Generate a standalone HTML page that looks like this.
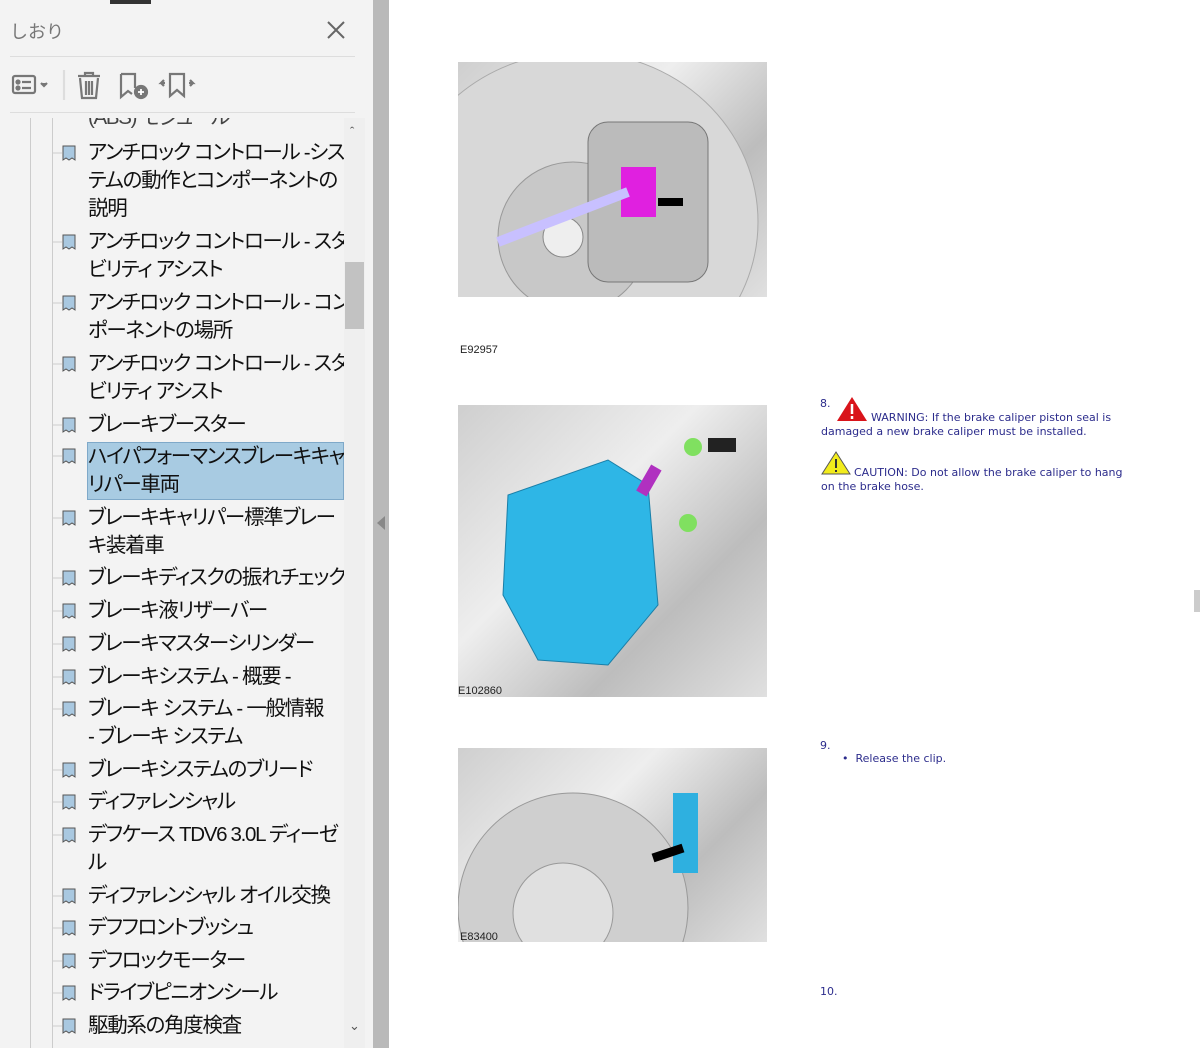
<!DOCTYPE html>
<html><head><meta charset="utf-8"><style>
body{margin:0;width:1200px;height:1048px;position:relative;overflow:hidden;background:#fff;font-family:"Liberation Sans","Noto Sans CJK JP",sans-serif}
#left{position:absolute;left:0;top:0;width:373px;height:1048px;background:#f3f3f3}
#bar{position:absolute;left:373px;top:0;width:16px;height:1048px;background:#b9b9b9}
#topdark{position:absolute;left:110px;top:0;width:41px;height:4px;background:#333;z-index:5}
.it{position:absolute;left:88px;width:256px;font-size:20.5px;line-height:28px;color:#111;white-space:nowrap;font-feature-settings:"palt";letter-spacing:-1.3px}
.hl{position:absolute;left:87px;top:442px;width:255px;height:56px;background:#a8cbe2;border:1px solid #7fa9c9}
.cap{position:absolute;font-size:11px;color:#222}
.img{position:absolute;left:458px;width:309px;background:linear-gradient(135deg,#cfcfcf,#eeeeee 40%,#bdbdbd 70%,#e0e0e0)}
.txt{position:absolute;font-family:"DejaVu Sans",sans-serif;font-size:11px;color:#2c2c8c;line-height:14px}
#clip{position:absolute;left:0;top:118px;width:344px;height:930px;overflow:hidden}
#clip .it{margin-top:-118px}
</style></head><body>
<div id="left">
<div style="position:absolute;left:10px;top:18px;font-size:18px;color:#777">しおり</div>
<svg style="position:absolute;left:326px;top:20px" width="20" height="20"><path d="M2 2L18 18M18 2L2 18" stroke="#666" stroke-width="2"/></svg>
<div style="position:absolute;left:10px;top:56px;width:345px;height:1px;background:#ddd"></div>
<svg style="position:absolute;left:10px;top:70px" width="190" height="32" fill="none" stroke="#777" stroke-width="2.2">
<rect x="3" y="6" width="22" height="17" rx="2"/><circle cx="8" cy="12" r="1.5" fill="#777"/><circle cx="8" cy="18" r="1.5" fill="#777"/><path d="M12 12h9M12 18h9"/><path d="M31 13l3 3 3-3" fill="#777"/>
<path d="M54 0v30" stroke="#ddd"/>
<path d="M68 6h22M75 6V3h8v3M70 8l2 20h14l2-20M76 11v14M79 11v14M82 11v14"/>
<path d="M111 4h14v14M111 4v23l7-6 4 3"/><circle cx="131" cy="22" r="6" fill="#777"/><path d="M128 22h6M131 19v6" stroke="#fff" stroke-width="1.8"/>
<path d="M160 4h14v22l-7-6-7 6zM155 13h-4l3-3M151 13l3 3M179 13h4l-3-3M183 13l-3 3"/>
</svg>
<div style="position:absolute;left:10px;top:112px;width:345px;height:1px;background:#ddd"></div>
<div style="position:absolute;left:30px;top:118px;width:1px;height:930px;background:#ccc"></div>
<div style="position:absolute;left:52px;top:118px;width:1px;height:930px;background:#ccc"></div>
<div style="position:absolute;left:344px;top:118px;width:21px;height:930px;background:#efefef"></div>
<div style="position:absolute;left:345px;top:262px;width:19px;height:67px;background:#c2c2c2"></div>
<div style="position:absolute;left:350px;top:124px;font-size:13px;color:#555">ˆ</div>
<div style="position:absolute;left:349px;top:1018px;font-size:13px;color:#555">⌄</div>
<div class="hl"></div>
<div id="clip">
<div class="it" style="top:104px;color:#444">(ABS) モジュール</div>
<div class="it" style="top:139px">アンチロック コントロール -シス<br>テムの動作とコンポーネントの<br>説明</div>
<div class="it" style="top:228px">アンチロック コントロール - スタ<br>ビリティ アシスト</div>
<div class="it" style="top:289px">アンチロック コントロール - コン<br>ポーネントの場所</div>
<div class="it" style="top:350px">アンチロック コントロール - スタ<br>ビリティ アシスト</div>
<div class="it" style="top:411px">ブレーキブースター</div>
<div class="it" style="top:443px">ハイパフォーマンスブレーキキャ<br>リパー車両</div>
<div class="it" style="top:504px">ブレーキキャリパー標準ブレー<br>キ装着車</div>
<div class="it" style="top:564px">ブレーキディスクの振れチェック</div>
<div class="it" style="top:597px">ブレーキ液リザーバー</div>
<div class="it" style="top:630px">ブレーキマスターシリンダー</div>
<div class="it" style="top:663px">ブレーキシステム - 概要 -</div>
<div class="it" style="top:695px">ブレーキ システム - 一般情報<br>- ブレーキ システム</div>
<div class="it" style="top:756px">ブレーキシステムのブリード</div>
<div class="it" style="top:788px">ディファレンシャル</div>
<div class="it" style="top:821px">デフケース TDV6 3.0L ディーゼ<br>ル</div>
<div class="it" style="top:882px">ディファレンシャル  オイル交換</div>
<div class="it" style="top:914px">デフフロントブッシュ</div>
<div class="it" style="top:947px">デフロックモーター</div>
<div class="it" style="top:979px">ドライブピニオンシール</div>
<div class="it" style="top:1012px">駆動系の角度検査</div>
</div>
<svg style="position:absolute;left:52px;top:0" width="30" height="1048">
<path d="M0 153h10M0 242h10M0 303h10M0 364h10M0 425h10M0 456h10M0 518h10M0 578h10M0 611h10M0 644h10M0 677h10M0 709h10M0 770h10M0 802h10M0 835h10M0 896h10M0 928h10M0 961h10M0 993h10M0 1026h10" stroke="#ccc"/>
<g fill="#a9c8e0" stroke="#555" stroke-width="1">
<path id="b" d="M11 146h12v14l-3-2-3 2-3-2-3 2z"/>
<use href="#b" y="89"/><use href="#b" y="150"/><use href="#b" y="211"/><use href="#b" y="272"/><use href="#b" y="303"/><use href="#b" y="365"/><use href="#b" y="425"/><use href="#b" y="458"/><use href="#b" y="491"/><use href="#b" y="524"/><use href="#b" y="556"/><use href="#b" y="617"/><use href="#b" y="649"/><use href="#b" y="682"/><use href="#b" y="743"/><use href="#b" y="775"/><use href="#b" y="808"/><use href="#b" y="840"/><use href="#b" y="873"/>
</g></svg>
</div>
<div id="topdark"></div>
<div id="bar"><svg style="position:absolute;left:4px;top:516px" width="8" height="14"><path d="M8 0L0 7 8 14z" fill="#888"/></svg></div>
<div style="position:absolute;left:1194px;top:590px;width:6px;height:22px;background:#ccc"></div>

<div class="img" style="top:62px;height:235px"></div>
<svg style="position:absolute;left:458px;top:62px" width="309" height="235"><ellipse cx="120" cy="160" rx="180" ry="170" fill="#d8d8d8" stroke="#aaa"/><circle cx="115" cy="175" r="75" fill="#c8c8c8" stroke="#999"/><circle cx="105" cy="175" r="20" fill="#eee" stroke="#888"/><rect x="130" y="60" width="120" height="160" rx="20" fill="#bbb" stroke="#777"/><rect x="163" y="105" width="35" height="50" fill="#e020e0"/><path d="M200 140h25" stroke="#000" stroke-width="8"/><path d="M40 180L170 130" stroke="#c8c0ff" stroke-width="10"/></svg>
<div class="cap" style="left:460px;top:344px">E92957</div>
<div class="img" style="top:405px;height:292px"></div>
<svg style="position:absolute;left:458px;top:405px" width="309" height="292"><path d="M50 90L150 55 190 80 200 200 150 260 80 255 45 190z" fill="#2eb6e6" stroke="#1a7fa8"/><rect x="185" y="60" width="12" height="30" fill="#b030c0" transform="rotate(30 190 75)"/><circle cx="235" cy="42" r="9" fill="#80e060"/><circle cx="230" cy="118" r="9" fill="#80e060"/><rect x="250" y="33" width="28" height="14" fill="#222"/></svg>
<div class="cap" style="left:458px;top:685px">E102860</div>
<div class="img" style="top:748px;height:194px"></div>
<svg style="position:absolute;left:458px;top:748px" width="309" height="194"><circle cx="115" cy="160" r="115" fill="#cfcfcf" stroke="#999"/><circle cx="105" cy="165" r="50" fill="#e0e0e0" stroke="#999"/><rect x="215" y="45" width="25" height="80" fill="#2eb0e0"/><path d="M195 110L225 100" stroke="#000" stroke-width="9"/></svg>
<div class="cap" style="left:460px;top:931px">E83400</div>

<div class="txt" style="left:820px;top:397px">8.</div>
<svg style="position:absolute;left:836px;top:396px" width="32" height="26"><path d="M16 1L31 25H1z" fill="#d9141b"/><path d="M16 8v10M16 20v3" stroke="#fff" stroke-width="2.5"/></svg>
<div class="txt" style="left:821px;top:411px;width:320px;text-indent:50px">WARNING: If the brake caliper piston seal is damaged a new brake caliper must be installed.</div>
<svg style="position:absolute;left:821px;top:451px" width="30" height="24"><path d="M15 1L29 23H1z" fill="#f2ec1c" stroke="#555"/><path d="M15 8v9M15 19v2" stroke="#333" stroke-width="2"/></svg>
<div class="txt" style="left:821px;top:466px;width:310px;text-indent:33px">CAUTION: Do not allow the brake caliper to hang on the brake hose.</div>
<div class="txt" style="left:820px;top:739px">9.</div>
<div class="txt" style="left:842px;top:752px">•&nbsp; Release the clip.</div>
<div class="txt" style="left:820px;top:985px">10.</div>
</body></html>
